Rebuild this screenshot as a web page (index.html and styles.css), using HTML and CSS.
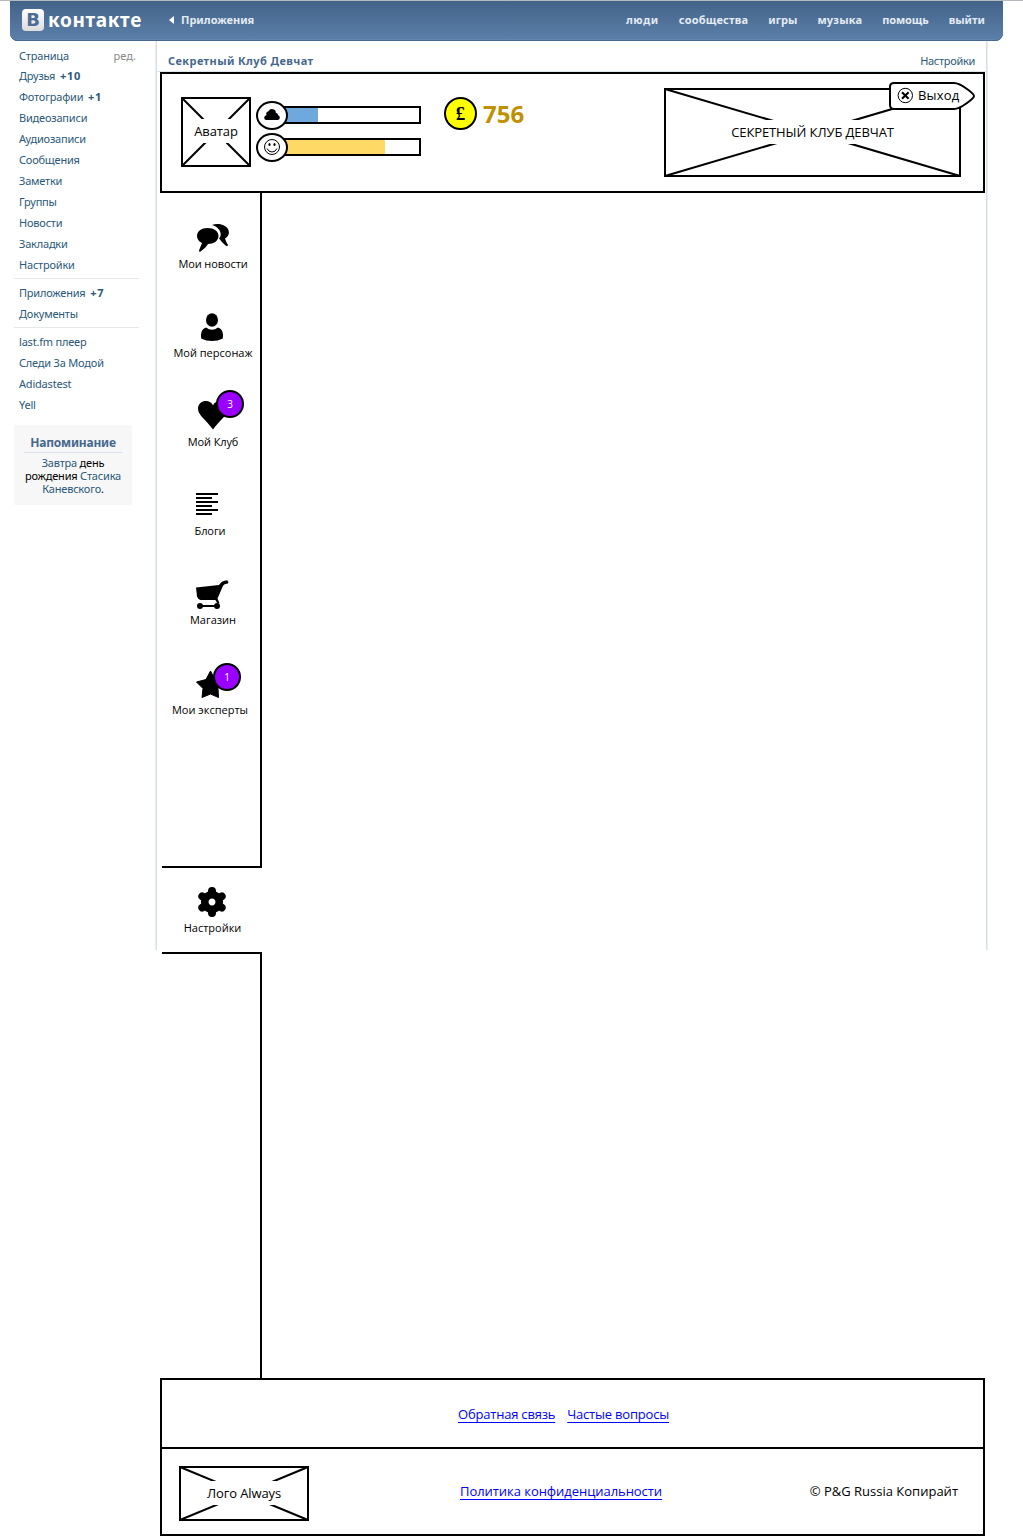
FILE: index.html
```html
<!DOCTYPE html>
<html lang="ru">
<head>
<meta charset="utf-8">
<title>Секретный Клуб Девчат</title>
<link rel="stylesheet" href="styles.css">
</head>
<body>
<header class="topbar">
  <a class="brand">
    <span class="brand-mark">B</span>
    <span class="brand-name">контакте</span>
  </a>
  <a class="back"><svg width="5" height="8" viewBox="0 0 5 8"><path d="M5 0v8L0 4z" fill="#fff"/></svg><span>Приложения</span></a>
  <nav class="topnav">
    <a class="wide">люди</a><a class="loose">сообщества</a><a>игры</a><a class="loose">музыка</a><a class="tight">помощь</a><a>выйти</a>
  </nav>
</header>
<div class="page">
  <aside class="left">
    <ul class="menu">
      <li class="first"><a>Страница</a><a class="edit">ред.</a></li>
      <li><a>Друзья <b>+10</b></a></li>
      <li><a>Фотографии <b>+1</b></a></li>
      <li><a>Видеозаписи</a></li>
      <li><a>Аудиозаписи</a></li>
      <li><a>Сообщения</a></li>
      <li><a>Заметки</a></li>
      <li><a>Группы</a></li>
      <li><a>Новости</a></li>
      <li><a>Закладки</a></li>
      <li><a>Настройки</a></li>
    </ul>
    <ul class="menu">
      <li><a>Приложения <b>+7</b></a></li>
      <li><a>Документы</a></li>
    </ul>
    <ul class="menu">
      <li><a>last.fm плеер</a></li>
      <li><a>Следи За Модой</a></li>
      <li><a>Adidastest</a></li>
      <li><a>Yell</a></li>
    </ul>
    <section class="reminder">
      <h2>Напоминание</h2>
      <p><a>Завтра</a> день<br>рождения <a>Стасика<br>Каневского</a>.</p>
    </section>
  </aside>
  <main class="frame">
    <div class="titlebar"><h1>Секретный Клуб Девчат</h1><a>Настройки</a></div>
    <section class="hero">
      <div class="crossed avatar">
        <svg viewBox="0 0 70 70"><path d="M1 1L69 69M69 1L1 69"/></svg>
        <span>Аватар</span>
      </div>
      <div class="gauges">
        <div class="gauge">
          <svg class="knob" width="32" height="29" viewBox="0 0 32 29"><ellipse cx="16" cy="14.5" rx="15" ry="13.5" fill="#fff" stroke="#000" stroke-width="2"/><path d="M10 19Q8 18.500 8.200 16.500Q8.500 14.500 10.500 14Q9.500 11 12.500 10.300Q14 7.500 17 8.300Q20 9 19.800 11.800Q22 12 22 14Q24 15 23.800 17Q23.500 19 21.500 19z"/></svg>
          <div class="bar"><i class="blue"></i></div>
        </div>
        <div class="gauge">
          <svg class="knob" width="32" height="29" viewBox="0 0 32 29"><ellipse cx="16" cy="14.500" rx="15" ry="13.500" fill="#fff" stroke="#000" stroke-width="2"/><circle cx="16" cy="14" r="7.500" fill="none" stroke="#000"/><ellipse cx="13.500" cy="11.500" rx="1.100" ry="1.500"/><ellipse cx="18.500" cy="11.500" rx="1.100" ry="1.500"/><path d="M11 15.500Q12.500 19 16 19T21 15.500" fill="none" stroke="#000"/></svg>
          <div class="bar"><i class="yellow"></i></div>
        </div>
      </div>
      <div class="money"><span class="coin">£</span><span class="sum">756</span></div>
      <div class="crossed banner">
        <svg viewBox="0 0 297 89"><path d="M1 1L296 88M296 1L1 88"/></svg>
        <span>СЕКРЕТНЫЙ КЛУБ ДЕВЧАТ</span>
        <a class="exit">
          <svg width="86" height="28" viewBox="0 0 86 28"><path d="M5 1H65Q70 1 78 7Q85 12 85 14Q85 16 78 21Q70 27 65 27H5Q1 27 1 23V5Q1 1 5 1z" fill="#fff" stroke="#000" stroke-width="2"/><circle cx="16.300" cy="13.500" r="7.200" fill="none" stroke="#000"/><path d="M13 10.200L19.600 16.800M19.600 10.200L13 16.800" stroke="#000" stroke-width="2"/></svg>
          <b>Выход</b>
        </a>
      </div>
    </section>
    <nav class="side">
      <a class="item"><svg width="40" height="40" viewBox="0 0 40 40"><path d="M19 9C24 7 32 8 35 13C37 17 35.500 20.500 32 22.500Q33 26 35 29Q34.500 31.500 31.500 28.500Q28.500 26 27 23.500L26 22.800Q28.500 20 27.300 16Q25 10.500 19 9z"/><path d="M14.500 12C21 12 25.500 15 25.500 20C25.500 25 20.500 28 15 28Q13 31.500 7.500 35.500Q5.500 36.500 6.200 34L9 27Q4 24.500 4 20C4 15 8.500 12 14.500 12z"/></svg><span class="snug">Мои новости</span></a>
      <a class="item"><svg width="40" height="40" viewBox="0 0 40 40"><ellipse cx="19" cy="15" rx="6" ry="6.800"/><path d="M13 22.500Q19 27 25 22.500Q28.500 23.500 29.500 27Q30.500 30 29.800 33.500Q25 36 19 36T8.200 33.500Q7.500 30 8.500 27Q9.500 23.500 13 22.500z"/></svg><span>Мой персонаж</span></a>
      <a class="item"><svg width="40" height="40" viewBox="0 0 40 40"><path d="M20 11.500C22 5 35 5 35 15C35 21 26 27 20 35.500C14 27 5 21 5 15C5 5 18 5 20 11.500z"/></svg><span class="snug">Мой Клуб</span><em class="badge b-club">3</em></a>
      <a class="item shift"><svg width="40" height="40" viewBox="0 0 40 40"><path d="M6 11h22M6 15h16M6 19h22M6 23h16M6 27h22M6 31h16" stroke="#000" stroke-width="2"/></svg><span class="snug">Блоги</span></a>
      <a class="item"><svg width="40" height="40" viewBox="0 0 40 40"><path d="M3 15.500L26 13Q29 8.500 34 8.200Q36.500 10 34.500 11.800Q31 11.500 29.500 15L24.500 26.500L26.500 31L24.500 32L22.500 28H7.500Q5 27.500 4 24.500z"/><path d="M8 34H24" stroke="#000" stroke-width="2"/><circle cx="7" cy="34" r="3"/><circle cx="24" cy="34" r="3"/></svg><span>Магазин</span></a>
      <a class="item shift last"><svg width="40" height="40" viewBox="0 0 40 40"><path d="M20.500 10L25 18.500L34.500 20.500L28 27.500L28.500 36.500L20.500 33L12 36.500L13 27.500L6.500 21L16 18.500z" stroke="#000" stroke-linejoin="round"/></svg><span>Мои эксперты</span><em class="badge b-expert">1</em></a>
    </nav>
    <a class="settings item"><svg width="40" height="40" viewBox="-20 -20 40 40"><circle r="7.300" fill="none" stroke="#000" stroke-width="7.600"/><path d="M0-8V-11M0 8V11M7-4L9.700-5.600M7 4L9.700 5.600M-7-4L-9.700-5.600M-7 4L-9.700 5.600" stroke="#000" stroke-width="8" stroke-linecap="round"/></svg><span>Настройки</span></a>
    <div class="side-rest"></div>
    <footer class="footer">
      <div class="links"><a>Обратная связь</a><a>Частые вопросы</a></div>
      <div class="legal">
        <div class="crossed logo">
          <svg viewBox="0 0 130 55"><path d="M1 1L129 54M129 1L1 54"/></svg>
          <span>Лого Always</span>
        </div>
        <a class="policy">Политика конфиденциальности</a>
        <span class="copy">© P&amp;G Russia Копирайт</span>
      </div>
    </footer>
  </main>
</div>
</body>
</html>
```
FILE: styles.css
```css
* { box-sizing: border-box; }
body {
  margin: 0;
  width: 1023px;
  height: 1536px;
  overflow: hidden;
  border-top: 1px solid #b5b9bd;
  background: #fff;
  color: #000;
  font: 11px/21px "Noto Sans", "Open Sans", sans-serif;
}
svg { display: block; flex: none; }
a, span { white-space: nowrap; }

.topbar {
  display: flex;
  align-items: center;
  width: 993px;
  height: 40px;
  margin-left: 10px;
  padding: 0 18px 3px 12px;
  border-radius: 0 0 8px 8px;
  background: linear-gradient(#436389, #5c80aa);
  box-shadow: inset 0 -1px #45688f, inset 0 -2px #6385b1;
  color: #e4ebf3;
  font-weight: 700;
}
.brand { display: flex; align-items: center; gap: 4px; width: 147px; }
.brand-mark {
  width: 22px;
  height: 22px;
  margin-top: 1px;
  border-radius: 4px;
  background: linear-gradient(#fff, #dcdcdc);
  color: #4c6d96;
  font: 700 18px/21px "DejaVu Sans", sans-serif;
  text-align: center;
}
.brand-name {
  color: #fff;
  font: 700 19px/22px "Noto Sans", sans-serif;
  letter-spacing: .65px;
}
.back { display: flex; align-items: center; gap: 7px; }
.topnav { display: flex; gap: 20px; margin-left: auto; }
.wide { letter-spacing: .6px; }
.loose { letter-spacing: .2px; }
.tight { letter-spacing: -.1px; }

.page { display: flex; }
.left { width: 155px; padding: 4px 16px 0 14px; flex: none; letter-spacing: -.2px; }
.menu { margin: 0; padding: 0 3px 0 5px; list-style: none; color: #2b587a; }
.menu li { display: flex; justify-content: space-between; height: 21px; }
.menu .first { height: 20px; }
.menu b { margin-left: 2px; letter-spacing: .7px; }
.menu + .menu { width: 125px; border-top: 1px solid #e7e8ea; margin: 3px 0 0; padding-top: 3px; }
.menu .edit { color: #888; letter-spacing: 0; }
.reminder {
  width: 118px;
  height: 80px;
  margin-top: 10px;
  padding: 8px 10px;
  background: #f7f7f7;
  text-align: center;
}
.reminder h2 {
  margin: 0 0 3px;
  height: 20px;
  border-bottom: 1px solid #d8e1ea;
  color: #45688e;
  font-size: 12px;
  line-height: 19px;
}
.reminder p { margin: 0; line-height: 13px; white-space: nowrap; }
.reminder a { color: #2b587a; }

.frame {
  width: 833px;
  padding: 0 3px 0 5px;
  background:
    linear-gradient(90deg, #e9eef4 1px, #d5dfe9 1px) 0 0 / 2px 909px no-repeat,
    linear-gradient(90deg, #d5dfe9 1px, #e9eef4 1px) 100% 0 / 2px 909px no-repeat;
}
.titlebar {
  display: flex;
  justify-content: space-between;
  height: 31px;
  margin: 0 -1px 0 -3px;
  padding: 9px 11px 0;
  border-bottom: 1px solid #dfe5ec;
  color: #2b587a;
  letter-spacing: -.3px;
}
.titlebar h1 { margin: 0; color: #45688e; font-size: 11px; line-height: 21px; letter-spacing: .4px; }

.hero {
  display: flex;
  align-items: flex-start;
  width: 825px;
  height: 121px;
  padding: 23px 22px 0 19px;
  border: 2px solid #000;
}
.crossed {
  position: relative;
  display: grid;
  place-items: center;
  border: 2px solid #000;
  font: 13px/24px "Open Sans", "Noto Sans", sans-serif;
}
.crossed > svg { grid-area: 1 / 1; margin: -2px; width: calc(100% + 4px); stroke: #000; stroke-width: 2; fill: none; }
.crossed > span { grid-area: 1 / 1; z-index: 1; margin-bottom: 2px; padding: 0 8px; background: #fff; letter-spacing: -.1px; }
.avatar { width: 70px; height: 70px; }
.gauges { display: grid; gap: 3px; margin: 4px 0 0 5px; width: 165px; }
.gauge { display: flex; align-items: flex-start; height: 29px; }
.knob { position: relative; z-index: 1; }
.bar { flex: 1; height: 18px; margin: 5px 0 0 -14px; border: 2px solid #000; }
.bar i { display: block; height: 100%; }
.blue { width: 42px; background: #6fa8dc; }
.yellow { width: 109px; background: #ffd966; }
.money { display: flex; align-items: center; gap: 6px; margin-left: 23px; }
.coin {
  width: 33px;
  height: 33px;
  border: 2px solid #000;
  border-radius: 50%;
  background: #ff0;
  font: 700 19px/29px "Liberation Serif", serif;
  text-align: center;
}
.sum { color: #bf9000; font: 700 24px/33px "Open Sans", sans-serif; }
.banner { width: 297px; height: 89px; margin: -9px 0 0 auto; }
.exit { position: absolute; z-index: 2; left: 223px; top: -8px; width: 86px; height: 28px; }
.exit b { position: absolute; left: 29px; top: 1px; font-weight: 400; letter-spacing: .2px; }

.side {
  width: 100px;
  height: 675px;
  margin-left: 2px;
  padding-top: 23px;
  border: solid #000;
  border-width: 0 2px 2px 0;
}
.item {
  position: relative;
  display: flex;
  flex-direction: column;
  align-items: center;
  width: 102px;
  height: 89px;
  font: 11px/16px "Open Sans", "Noto Sans", sans-serif;
}
.snug { letter-spacing: -.1px; }
.shift { width: 96px; }
.last span { margin-top: 1px; }
.badge {
  position: absolute;
  width: 28px;
  height: 28px;
  border: 2px solid #000;
  border-radius: 50%;
  background: #90f;
  color: #fff;
  font: 10px/24px "Open Sans", sans-serif;
  text-align: center;
}
.b-club { left: 54px; top: -4px; }
.b-expert { left: 51px; top: 2px; }
.settings { height: 84px; margin-left: 2px; padding-top: 14px; width: 100px; }
.settings span { margin: -2px -1px 0 0; }
.side-rest { width: 100px; height: 426px; margin-left: 2px; border: solid #000; border-width: 2px 2px 0 0; }

.footer { width: 825px; height: 158px; border: 2px solid #000; font: 13px/20px "Open Sans", "Noto Sans", sans-serif; }
.footer a { color: #00f; text-decoration: underline; text-decoration-thickness: 1px; text-underline-offset: 3px; }
.links { display: flex; gap: 12px; height: 69px; padding: 24px 0 0 296px; border-bottom: 2px solid #000; letter-spacing: -.2px; }
.legal { display: flex; height: 85px; padding: 17px 25px 0 17px; }
.logo { width: 130px; height: 55px; }
.policy { margin: 15px 0 0 151px; letter-spacing: -.05px; }
.copy { margin: 15px 0 0 auto; }
```
